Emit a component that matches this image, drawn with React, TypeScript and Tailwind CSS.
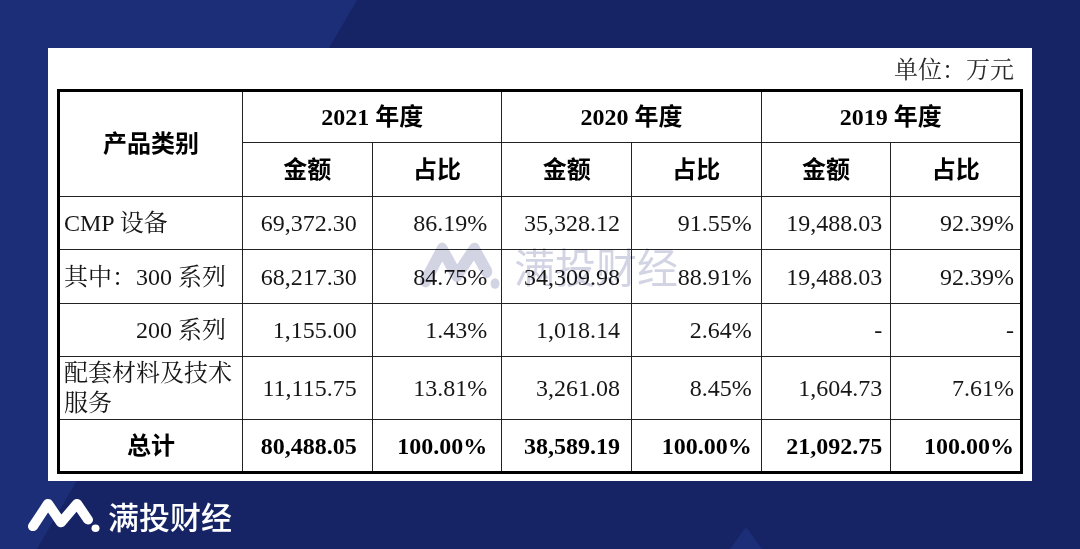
import React from "react";

const serif = "font-['Liberation_Serif','Noto_Serif_CJK_SC','Noto_Sans_CJK_SC',serif]";
// headers: Times digits, hei-style bold Chinese
const head = "font-bold text-black font-['Liberation_Serif','Noto_Sans_CJK_SC',sans-serif]";

type Row = {
  label: string;
  indent?: boolean;
  values: string[];
  bold?: boolean;
  tall?: boolean;
};

const rows: Row[] = [
  { label: "CMP 设备", values: ["69,372.30", "86.19%", "35,328.12", "91.55%", "19,488.03", "92.39%"] },
  { label: "其中：300 系列", values: ["68,217.30", "84.75%", "34,309.98", "88.91%", "19,488.03", "92.39%"] },
  { label: "200 系列", indent: true, values: ["1,155.00", "1.43%", "1,018.14", "2.64%", "-", "-"] },
  { label: "配套材料及技术服务", tall: true, values: ["11,115.75", "13.81%", "3,261.08", "8.45%", "1,604.73", "7.61%"] },
  { label: "总计", bold: true, values: ["80,488.05", "100.00%", "38,589.19", "100.00%", "21,092.75", "100.00%"] },
];

// right padding differs a little per column in the source document
const padRight = ["pr-[15px]", "pr-[14px]", "pr-[11px]", "pr-[9px]", "pr-[8px]", "pr-[6px]"];

function Logo({ className }: { className?: string }) {
  return (
    <svg viewBox="0 0 72 38" className={className} fill="none" preserveAspectRatio="none">
      <path
        d="M5 31 L20 7 L33 27 L49 7 L60 24"
        stroke="currentColor"
        strokeWidth="10"
        strokeLinecap="round"
        strokeLinejoin="round"
      />
      <circle cx="67.5" cy="33" r="4" fill="currentColor" />
    </svg>
  );
}

function Cell({ children, className }: { children?: React.ReactNode; className?: string }) {
  return <div className={`bg-white flex items-center ${className ?? ""}`}>{children}</div>;
}

function RevenueTable() {
  const years = ["2021", "2020", "2019"];
  return (
    <div
      className={`border-[3px] border-black bg-[#222] grid grid-cols-[182px_repeat(6,1fr)] grid-rows-[50px_53px_52px_53px_52px_62px_51px] gap-px text-[24px] text-[#161616] ${serif}`}
    >
      {/* header */}
      <Cell className={`row-span-2 justify-center ${head}`}>产品类别</Cell>
      {years.map((y) => (
        <Cell key={y} className={`col-span-2 justify-center ${head}`}>
          {y} 年度
        </Cell>
      ))}
      {years.map((y) => (
        <React.Fragment key={y + "sub"}>
          <Cell className={`justify-center ${head}`}>金额</Cell>
          <Cell className={`justify-center ${head}`}>占比</Cell>
        </React.Fragment>
      ))}

      {/* body */}
      {rows.map((r) => (
        <React.Fragment key={r.label}>
          <Cell
            className={
              r.bold
                ? `justify-center ${head}`
                : r.indent
                ? "pl-[76px]"
                : r.tall
                ? "pl-[4px] leading-[30px]"
                : "pl-[4px]"
            }
          >
            {r.label}
          </Cell>
          {r.values.map((v, i) => (
            <Cell key={i} className={`justify-end ${padRight[i]} ${r.bold ? "font-bold text-black" : ""}`}>
              {v}
            </Cell>
          ))}
        </React.Fragment>
      ))}
    </div>
  );
}

export default function App() {
  return (
    <div className="relative w-[1080px] h-[549px] overflow-hidden bg-[#162466]">
      {/* background decoration */}
      <svg className="absolute inset-0 w-full h-full" viewBox="0 0 1080 549">
        <polygon points="0,0 357,0 37,549 0,549" fill="#1d2e79" />
        <polygon points="746,527 730,549 762,549" fill="#1d2e79" />
      </svg>

      <div className="relative flex flex-col">
        {/* white sheet */}
        <div className="relative ml-[48px] mt-[48px] w-[984px] h-[433px] bg-white px-[9px]">
          <div className={`h-[41px] pt-[10px] pr-[9px] text-right text-[24px] leading-[24px] text-[#2a2a2a] ${serif}`}>
            单位：万元
          </div>
          <RevenueTable />

          {/* watermark */}
          <div className="absolute left-[372px] top-[192px] flex items-center gap-[14px] text-[#1e2a78]/20 mix-blend-multiply pointer-events-none">
            <Logo className="w-[80px] h-[50px]" />
            <span className="text-[41px] leading-none font-['Noto_Sans_CJK_SC',sans-serif]">满投财经</span>
          </div>
        </div>

        {/* footer brand */}
        <div className="h-[68px] pl-[28px] flex items-center gap-[8px] text-white">
          <Logo className="w-[72px] h-[36px]" />
          <span className="text-[31px] leading-none font-medium font-['Noto_Sans_CJK_SC',sans-serif]">满投财经</span>
        </div>
      </div>
    </div>
  );
}
